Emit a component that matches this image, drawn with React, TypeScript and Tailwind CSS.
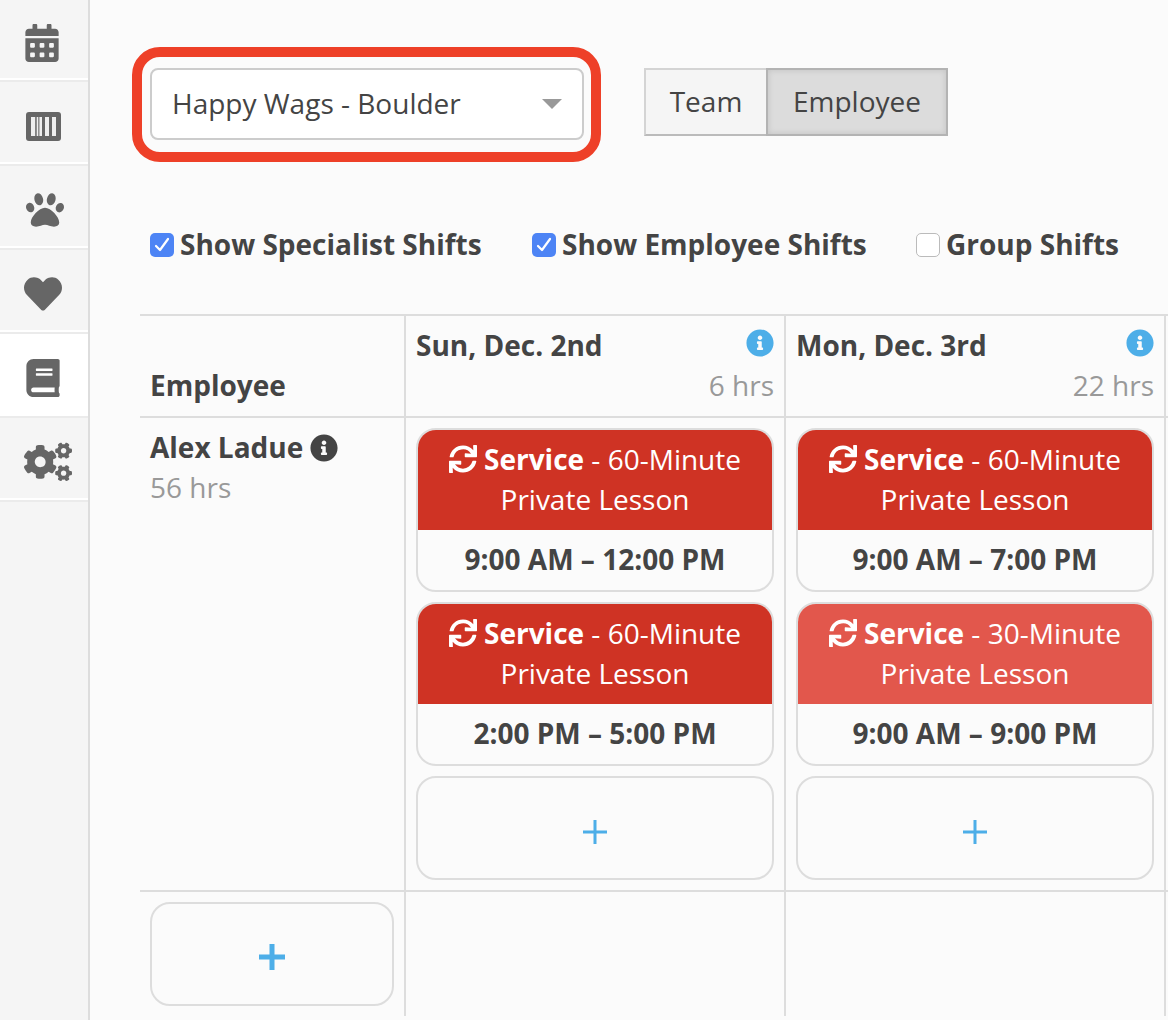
import { FaCalendarAlt, FaPaw, FaHeart, FaBook, FaCogs, FaSync, FaInfoCircle } from "react-icons/fa";
import type { ReactNode } from "react";

function Barcode() {
  return (
    <svg width="35" height="29" viewBox="0 0 35 29">
      <rect width="35" height="29" rx="3" fill="#666" />
      <g fill="#eeeeee">
        <rect x="5" y="5" width="4.2" height="19" />
        <rect x="10.7" y="5" width="1.6" height="19" />
        <rect x="13.4" y="5" width="2.6" height="19" />
        <rect x="19" y="5" width="4" height="19" />
        <rect x="26" y="5" width="4" height="19" />
      </g>
    </svg>
  );
}

function NavItem({ icon, first, active }: { icon: ReactNode; first?: boolean; active?: boolean }) {
  return (
    <div
      className={`flex items-center border-b-2 border-b-white pl-[24px] pt-[8px] ${first ? "h-[80px]" : "h-[84px] border-t-2 border-t-[#ebebeb]"} ${active ? "bg-white" : "bg-[#f5f5f5]"}`}
    >
      {icon}
    </div>
  );
}

function Check({ checked }: { checked?: boolean }) {
  return checked ? (
    <span className="flex h-6 w-6 items-center justify-center rounded-[5px] bg-[#4d84f5]">
      <svg width="24" height="24" viewBox="0 0 24 24" fill="none" stroke="#ffffff" strokeWidth="2.2" strokeLinecap="round" strokeLinejoin="round">
        <path d="M6 13l4 4 8-11" />
      </svg>
    </span>
  ) : (
    <span className="h-6 w-6 rounded-[5px] border border-[#bbbbbb] bg-white" />
  );
}

function CheckLabel({ checked, label, className }: { checked?: boolean; label: string; className: string }) {
  return (
    <div className={`flex items-center gap-[6px] ${className}`}>
      <Check checked={checked} />
      <span className="pb-[2px] text-[28px] font-bold leading-10 text-[#444444]">{label}</span>
    </div>
  );
}

function DayHeader({ day, hrs }: { day: string; hrs: string }) {
  return (
    <div className="border-r-2 border-b-2 border-[#dddddd] px-[10px] pt-[9px]">
      <div className="flex h-10 items-start justify-between">
        <span className="text-[28px] font-bold leading-10 text-[#444444]">{day}</span>
        <FaInfoCircle size={28} className="mt-[4px] text-[#4daee8]" />
      </div>
      <div className="text-right text-[28px] leading-10 text-[#999999]">{hrs}</div>
    </div>
  );
}

function ShiftCard({ minutes, time, light }: { minutes: string; time: string; light?: boolean }) {
  return (
    <div className="h-[164px] overflow-hidden rounded-[20px] border-2 border-[#dddddd]">
      <div className={`h-[100px] pt-[9px] text-center text-[28px] leading-10 text-white ${light ? "bg-[#e2574c]" : "bg-[#cf3324]"}`}>
        <div className="flex items-center justify-center">
          <FaSync size={28} className="mr-[7px]" />
          <span className="font-bold">Service</span>
          <span className="whitespace-pre"> - {minutes}-Minute</span>
        </div>
        <div>Private Lesson</div>
      </div>
      <div className="flex h-[60px] items-center justify-center pb-[2px] text-[28px] font-bold text-[#444444]">{time}</div>
    </div>
  );
}

function AddButton({ bold }: { bold?: boolean }) {
  return (
    <div className={`flex h-[104px] items-center justify-center rounded-[20px] border-2 border-[#dddddd] ${bold ? "pt-[6px]" : "pt-[8px]"}`}>
      <svg width="26" height="26" viewBox="0 0 26 26" fill="#4daee8">
        {bold ? (
          <path d="M0 10.5h26v5H0zM10.5 0h5v26h-5z" />
        ) : (
          <path d="M1 11.5h24v3H1zM11.5 1h3v24h-3z" />
        )}
      </svg>
    </div>
  );
}

export default function App() {
  return (
    <div className="flex h-[1020px] overflow-hidden bg-[#fbfbfb] font-['Open_Sans',sans-serif] text-[#444444]">
      <aside className="w-[90px] shrink-0 border-r-2 border-[#dddddd] bg-[#f5f5f5]">
        <NavItem first icon={<FaCalendarAlt size={38} color="#666" className="ml-[-1px]" />} />
        <NavItem icon={<span className="ml-[2px] flex"><Barcode /></span>} />
        <NavItem icon={<FaPaw size={38} color="#666" className="ml-[2px]" />} />
        <NavItem icon={<FaHeart size={38} color="#666" />} />
        <NavItem active icon={<FaBook size={38} color="#666" />} />
        <NavItem icon={<FaCogs size={48} color="#666" />} />
        <div className="border-t-2 border-[#ebebeb]" />
      </aside>

      <main className="min-w-0 flex-1 pl-[42px] pt-[47px]">
        <div className="flex items-start">
          <div className="h-[115px] w-[469px] rounded-[28px] border-[10px] border-[#ee4028] pl-[8px] pt-[11px]">
            <div className="flex h-[72px] w-[434px] items-center justify-between rounded-[8px] border-2 border-[#cccccc] bg-white pl-[20px] pr-[20px]">
              <span className="pb-[2px] text-[28px] text-[#444444]">Happy Wags - Boulder</span>
              <span className="h-0 w-0 border-x-[10px] border-t-[10px] border-x-transparent border-t-[#999999]" />
            </div>
          </div>
          <div className="ml-[43px] mt-[21px] flex h-[68px] text-[28px] text-[#444444]">
            <div className="flex w-[122px] items-center justify-center border-2 border-r-0 border-[#d4d4d4] border-b-[#bbbbbb] bg-[#f5f5f5] pb-[2px]">Team</div>
            <div className="flex w-[182px] items-center justify-center border-2 border-[#b3b3b3] bg-[#dcdcdc] pb-[2px] shadow-[inset_0_0_6px_rgba(0,0,0,0.12)]">Employee</div>
          </div>
        </div>

        <div className="ml-[18px] mt-[63px] flex h-10 items-center">
          <CheckLabel checked label="Show Specialist Shifts" className="w-[382px]" />
          <CheckLabel checked label="Show Employee Shifts" className="w-[384px]" />
          <CheckLabel label="Group Shifts" className="shrink-0" />
        </div>

        <div className="ml-[8px] mt-[49px] grid grid-cols-[266px_380px_380px_1fr] grid-rows-[102px_474px_124px] border-t-2 border-[#dddddd]">
          <div className="flex items-end border-r-2 border-b-2 border-[#dddddd] px-[10px] pb-[11px]">
            <span className="text-[28px] font-bold leading-10 text-[#444444]">Employee</span>
          </div>
          <DayHeader day="Sun, Dec. 2nd" hrs="6 hrs" />
          <DayHeader day="Mon, Dec. 3rd" hrs="22 hrs" />
          <div className="border-b-2 border-[#dddddd]" />

          <div className="border-r-2 border-b-2 border-[#dddddd] px-[10px] pt-[9px]">
            <div className="flex h-10 items-center gap-[7px]">
              <span className="text-[28px] font-bold text-[#444444]">Alex Ladue</span>
              <FaInfoCircle size={28} className="mt-[1px] text-[#444444]" />
            </div>
            <div className="text-[28px] leading-10 text-[#999999]">56 hrs</div>
          </div>
          <div className="flex flex-col gap-[10px] border-r-2 border-b-2 border-[#dddddd] p-[10px]">
            <ShiftCard minutes="60" time="9:00 AM – 12:00 PM" />
            <ShiftCard minutes="60" time="2:00 PM – 5:00 PM" />
            <AddButton />
          </div>
          <div className="flex flex-col gap-[10px] border-r-2 border-b-2 border-[#dddddd] p-[10px]">
            <ShiftCard minutes="60" time="9:00 AM – 7:00 PM" />
            <ShiftCard light minutes="30" time="9:00 AM – 9:00 PM" />
            <AddButton />
          </div>
          <div className="border-b-2 border-[#dddddd]" />

          <div className="border-r-2 border-[#dddddd] p-[10px]">
            <AddButton bold />
          </div>
          <div className="border-r-2 border-[#dddddd]" />
          <div className="border-r-2 border-[#dddddd]" />
          <div />
        </div>
      </main>
    </div>
  );
}
